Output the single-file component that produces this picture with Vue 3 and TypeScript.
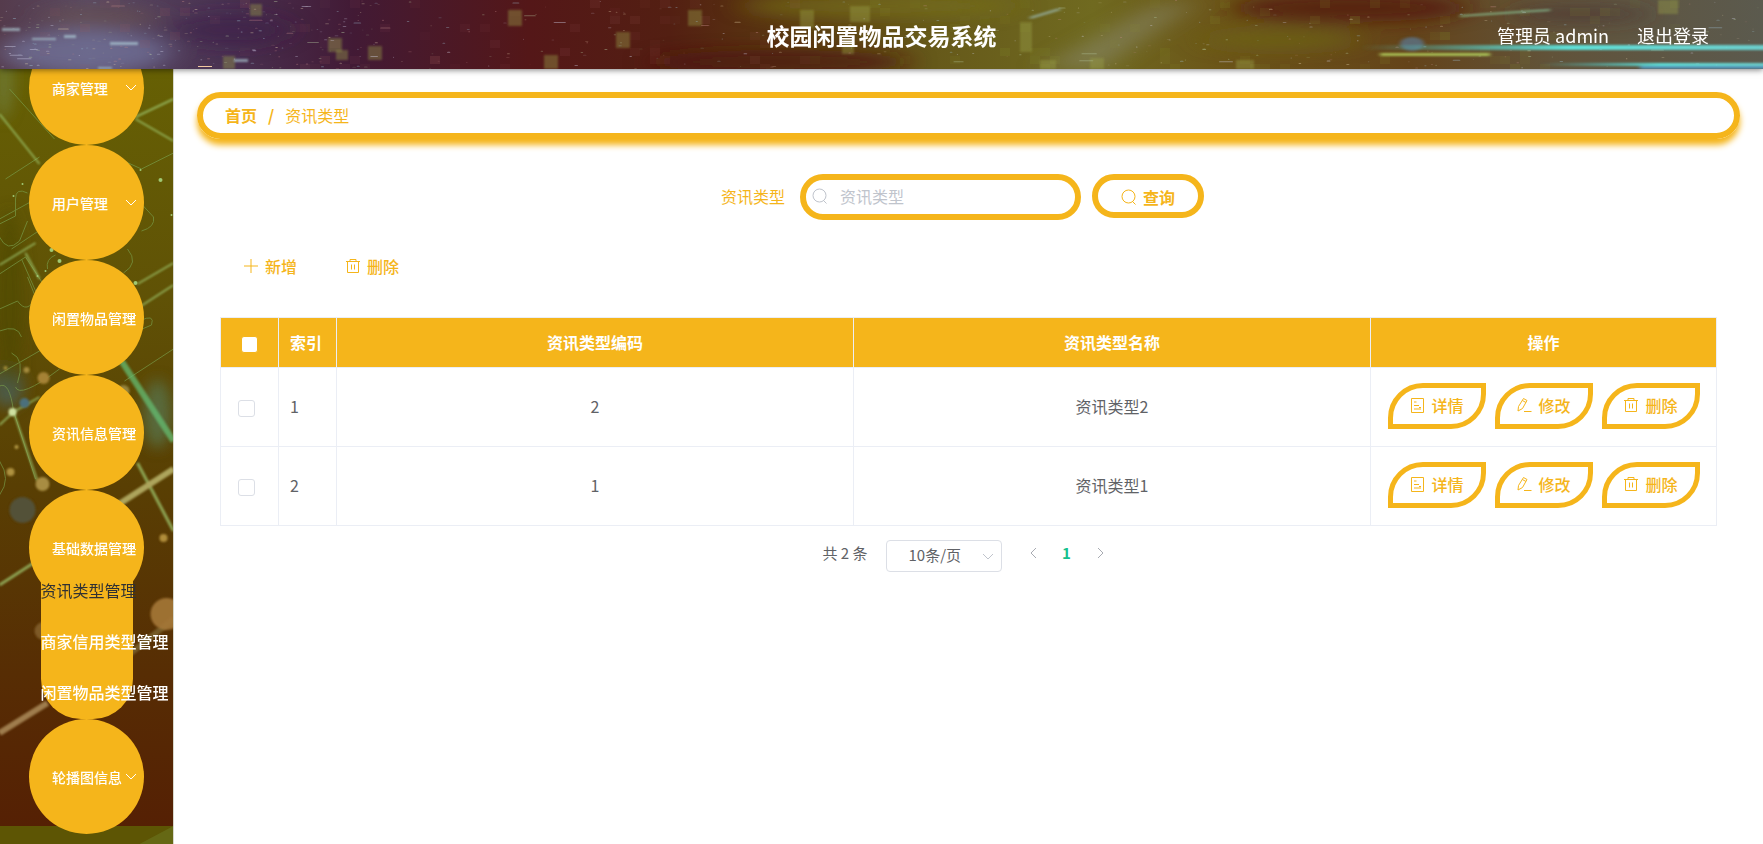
<script setup lang="ts">
import { ref } from 'vue'

interface MenuEntry { label: string }
interface Row { id: number; code: string; name: string }

const menusTop: MenuEntry[] = [
  { label: '商家管理' },
  { label: '用户管理' },
  { label: '闲置物品管理' },
  { label: '资讯信息管理' },
]
const children = ['资讯类型管理', '商家信用类型管理', '闲置物品类型管理']
const rows = ref<Row[]>([
  { id: 1, code: '2', name: '资讯类型2' },
  { id: 2, code: '1', name: '资讯类型1' },
])
const keyword = ref('')
const allChecked = ref(false)
const checked = ref<number[]>([])
const pageSize = ref('10')
const actions = [
  { label: '详情', icon: 'doc' },
  { label: '修改', icon: 'edit' },
  { label: '删除', icon: 'trash' },
]

// Deterministic noise for the starfield in the banner
let seed = 7
function rnd(): number {
  seed = (seed * 16807) % 2147483647
  return seed / 2147483647
}
const colors = ['#e8d6b0', '#9fc4d6', '#c98b8b', '#b5c9a0', '#d8d8f0']
const sparks = Array.from({ length: 520 }, (_, i) => {
  const x = i % 3 === 0 ? rnd() * 380 : rnd() * 1763
  const long = rnd() > 0.95
  return {
    x,
    y: rnd() * 69,
    w: long ? 6 + rnd() * 10 : 1 + rnd() * 3,
    o: long ? 0.4 : 0.1 + rnd() * 0.35,
    c: colors[Math.floor(rnd() * colors.length)],
  }
})
const tiles = Array.from({ length: 150 }, () => {
  const col = Math.floor(rnd() * 170)
  return { x: col * 10, y: Math.floor(rnd() * 9) * 8, o: 0.04 + rnd() * 0.09, c: col > 80 ? '#8d9a30' : '#a05a60' }
})
const blocks = [
  [508, 10, 14, 16], [328, 38, 14, 14], [336, 50, 12, 10], [223, 56, 12, 13], [544, 55, 14, 14],
  [688, 10, 14, 16], [616, 32, 14, 16], [800, 10, 14, 18], [850, 6, 20, 16], [842, 40, 12, 14],
  [1020, 22, 12, 30], [1090, 58, 14, 11], [1040, 60, 16, 9], [1236, 60, 18, 9], [1658, 0, 20, 14],
  [368, 46, 14, 14], [250, 4, 12, 12],
]
</script>

<template>
  <div class="page">
    <header class="banner">
      <svg class="banner-art" viewBox="0 0 1763 69" preserveAspectRatio="none" aria-hidden="true">
        <defs>
          <linearGradient id="sky">
            <stop offset="0" stop-color="#553b4c" />
            <stop offset=".05" stop-color="#5a4a62" />
            <stop offset=".13" stop-color="#493151" />
            <stop offset=".2" stop-color="#421a35" />
            <stop offset=".3" stop-color="#541718" />
            <stop offset=".38" stop-color="#531f12" />
            <stop offset=".45" stop-color="#5a3a10" />
            <stop offset=".53" stop-color="#66591a" />
            <stop offset=".62" stop-color="#706a20" />
            <stop offset=".7" stop-color="#6b5318" />
            <stop offset=".8" stop-color="#644319" />
            <stop offset=".88" stop-color="#61533a" />
            <stop offset="1" stop-color="#5b5a4e" />
          </linearGradient>
          <linearGradient id="beam">
            <stop offset="0" stop-color="#4fd0d0" stop-opacity="0" />
            <stop offset=".5" stop-color="#5fe0d8" />
            <stop offset="1" stop-color="#6fd8d8" stop-opacity=".9" />
          </linearGradient>
          <filter id="soft" x="-50%" y="-50%" width="200%" height="200%"><feGaussianBlur stdDeviation="14 8" /></filter>
          <filter id="glow" x="-20%" y="-50%" width="140%" height="200%"><feGaussianBlur stdDeviation="2 1" /></filter>
          <filter id="edge"><feGaussianBlur stdDeviation="1" /></filter>
        </defs>
        <rect width="1763" height="69" fill="url(#sky)" />
        <g filter="url(#soft)">
          <ellipse cx="85" cy="52" rx="85" ry="22" fill="#7478a0" opacity=".7" />
          <ellipse cx="100" cy="18" rx="60" ry="12" fill="#6b5450" opacity=".6" />
          <ellipse cx="230" cy="30" rx="60" ry="16" fill="#3a1f48" opacity=".6" />
          <ellipse cx="880" cy="6" rx="140" ry="12" fill="#776f20" opacity=".7" />
          <ellipse cx="780" cy="62" rx="130" ry="12" fill="#4e1512" opacity=".8" />
          <ellipse cx="1350" cy="8" rx="120" ry="14" fill="#54200a" opacity=".9" />
          <ellipse cx="1580" cy="14" rx="70" ry="8" fill="#4a3134" opacity=".6" />
          <ellipse cx="1280" cy="40" rx="80" ry="9" fill="#6d6416" opacity=".8" />
          <path d="M1040 69L1150 8L1200 0L1100 69Z" fill="#87866a" opacity=".6" />
        </g>
        <rect v-for="(t, i) in tiles" :key="'t' + i" :x="t.x" :y="t.y" width="10" height="8" :fill="t.c" :opacity="t.o" />
        <g filter="url(#edge)">
          <rect v-for="(b, i) in blocks" :key="'b' + i" :x="b[0]" :y="b[1]" :width="b[2]" :height="b[3]" fill="#9ba04a" opacity=".4" />
        </g>
        <rect v-for="(s, i) in sparks" :key="'s' + i" :x="s.x" :y="s.y" :width="s.w" height="1" rx="1" :fill="s.c" :opacity="s.o" />
        <g filter="url(#glow)">
          <ellipse cx="1412" cy="44" rx="12" ry="7" fill="#5590c8" opacity=".5" />
          <rect x="1360" y="45" width="420" height="5" fill="url(#beam)" />
          <rect x="1380" y="53" width="110" height="3" fill="#b7d860" opacity=".8" />
          <rect x="1540" y="63" width="240" height="3" fill="url(#beam)" />
          <rect x="1640" y="66" width="140" height="3" fill="#4f9fd0" opacity=".8" />
          <path d="M1460 16L1550 10" stroke="#8fd0a0" stroke-width="2" opacity=".7" />
          <path d="M1030 18L1060 9" stroke="#a8d0d8" stroke-width="2" opacity=".7" />
        </g>
        <g fill="#b9dce2" opacity=".6" filter="url(#edge)">
          <rect x="32" y="38" width="24" height="2" /><rect x="64" y="35" width="12" height="3" />
          <rect x="110" y="42" width="28" height="3" /><rect x="98" y="67" width="14" height="2" />
          <rect x="2" y="28" width="18" height="3" /><rect x="234" y="59" width="14" height="3" />
        </g>
        <rect x="198" y="66" width="14" height="1" fill="#f2c9a0" />
      </svg>
      <h1>校园闲置物品交易系统</h1>
      <div class="account">
        <span>管理员 admin</span>
        <button type="button">退出登录</button>
      </div>
    </header>

    <div class="body">
      <aside class="side">
        <svg class="side-art" viewBox="0 0 174 775" preserveAspectRatio="xMidYMin slice" aria-hidden="true">
          <defs>
            <linearGradient id="wall" x1="0" y1="0" x2="0" y2="1">
              <stop offset="0" stop-color="#666004" />
              <stop offset=".3" stop-color="#605206" />
              <stop offset=".55" stop-color="#593f03" />
              <stop offset=".8" stop-color="#572d04" />
              <stop offset="1" stop-color="#552004" />
            </linearGradient>
            <filter id="dots"><feGaussianBlur stdDeviation="1" /></filter>
            <filter id="haze" x="-50%" y="-50%" width="200%" height="200%"><feGaussianBlur stdDeviation="7" /></filter>
          </defs>
          <rect width="174" height="757" fill="url(#wall)" />
          <g filter="url(#haze)">
            <ellipse cx="4" cy="10" rx="10" ry="40" fill="#6f7d3c" opacity=".7" />
            <ellipse cx="8" cy="318" rx="16" ry="20" fill="#4e5c4a" />
            <ellipse cx="158" cy="345" rx="14" ry="34" fill="#586b3e" />
            <ellipse cx="10" cy="230" rx="14" ry="90" fill="#4b4a02" opacity=".6" />
          </g>
          <g fill="none" stroke="#7aa04e" stroke-width="1" opacity=".65">
            <path d="M0 155L16 147V130Q16 118 28 124M0 205L26 188L60 240M12 180L42 160M22 190L44 240M0 240L18 232Q28 246 36 228L28 208M6 110L40 88M0 150L40 128M0 305L52 275M18 314Q26 290 12 284M16 318Q20 330 60 300M0 262Q18 255 22 268" />
            <path d="M10 20L55 70M0 168Q8 184 20 172L28 152M120 90L142 100L174 84M142 135L154 148Q156 158 142 162M128 180Q140 194 124 204M140 252Q156 244 152 256L138 262M125 312L174 280M48 200Q46 190 56 186M0 317Q10 312 14 342L36 410M0 392Q12 410 0 426" />
          </g>
          <g stroke="#9fc86f" fill="none" opacity=".75" filter="url(#dots)">
            <path d="M0 45L40 95" stroke-width="2" />
            <path d="M136 48L174 30M136 50L174 72" stroke-width="2" />
            <path d="M138 215L174 194M140 238L174 216M0 356L14 343L40 328M14 343L38 412" stroke-width="2" />
            <path d="M26 184L40 210M0 196L36 174" stroke-width="2" />
            <path d="M122 292L174 372" stroke="#65bd72" stroke-width="6" />
            <path d="M0 516L34 494M138 394L174 462" stroke-width="3" />
            <path d="M118 436L174 400" stroke="#c9c77c" stroke-width="6" />
            <path d="M0 664L48 634" stroke="#b89a66" stroke-width="6" />
            <path d="M130 585L174 550" stroke="#806b36" stroke-width="6" />
          </g>
          <g filter="url(#dots)">
            <circle cx="167" cy="545" r="16" fill="#a57838" opacity=".9" />
            <circle cx="44" cy="562" r="9" fill="#7e5a26" />
            <circle cx="44" cy="309" r="6" fill="#a58236" />
            <circle cx="124" cy="322" r="6" fill="#96843c" />
            <circle cx="43" cy="415" r="7" fill="#a88d42" />
            <circle cx="23" cy="441" r="13" fill="#535139" />
            <circle cx="25" cy="334" r="5" fill="#4c707b" />
            <circle cx="11" cy="403" r="4" fill="#af9240" />
            <circle cx="27" cy="301" r="3" fill="#a38a3e" />
            <circle cx="164" cy="469" r="4" fill="#b08d3a" />
            <circle cx="13" cy="343" r="4" fill="#cfe0a0" />
            <circle cx="6" cy="299" r="2" fill="#a68e38" />
            <circle cx="17" cy="378" r="2" fill="#b69b46" />
          </g>
          <g fill="#9fc873">
            <circle cx="14" cy="127" r="1" /><circle cx="23" cy="115" r="1" /><circle cx="52" cy="181" r="2" />
            <circle cx="60" cy="192" r="2" /><circle cx="46" cy="202" r="1" /><circle cx="38" cy="207" r="1" />
            <circle cx="136" cy="214" r="2" /><circle cx="161" cy="111" r="2" /><circle cx="141" cy="101" r="1" />
            <circle cx="172" cy="146" r="1" />
          </g>
          <rect y="757" width="174" height="18" fill="#5d5504" />
          <path d="M140 775L174 757V775Z" fill="#6a7420" opacity=".6" />
        </svg>
        <nav>
          <ul class="menu">
            <li v-for="m in menusTop" :key="m.label">
              <button type="button" class="disc">
                <span>{{ m.label }}</span>
                <svg class="chev" viewBox="0 0 14 14"><path d="M1 4L6 9L11 4" /></svg>
              </button>
            </li>
            <li>
              <button type="button" class="disc" aria-expanded="true">
                <span>基础数据管理</span>
                <svg class="chev" viewBox="0 0 14 14"><path d="M1 9L6 4L11 9" /></svg>
              </button>
              <ul class="sub">
                <li v-for="(c, i) in children" :key="c">
                  <a href="#" :class="{ active: i === 0 }">{{ c }}</a>
                </li>
              </ul>
            </li>
            <li>
              <button type="button" class="disc">
                <span>轮播图信息</span>
                <svg class="chev" viewBox="0 0 14 14"><path d="M1 4L6 9L11 4" /></svg>
              </button>
            </li>
          </ul>
        </nav>
      </aside>

      <main>
        <nav class="crumbs" aria-label="breadcrumb">
          <a href="#">首页</a><span class="sep">/</span><span>资讯类型</span>
        </nav>

        <form class="search" @submit.prevent>
          <label for="kw">资讯类型</label>
          <div class="field">
            <svg class="ico" viewBox="0 0 16 16"><circle cx="7.5" cy="7.5" r="6.5" /><path d="M11.5 12.5L14.5 15.5" /></svg>
            <input id="kw" v-model="keyword" type="text" placeholder="资讯类型" />
          </div>
          <button type="submit" class="query">
            <svg class="ico" viewBox="0 0 16 16"><circle cx="7.5" cy="7.5" r="6.5" /><path d="M11.5 12.5L14.5 15.5" /></svg>
            查询
          </button>
        </form>

        <div class="tools">
          <button type="button">
            <svg class="ico" viewBox="0 0 16 16"><path d="M8 1V15M1 8H15" /></svg>新增
          </button>
          <button type="button">
            <svg class="ico" viewBox="0 0 16 16"><path d="M1 3.5H15M5 3.5V1.5H11V3.5M2.5 3.5V14.5H13.5V3.5M6.5 6.5V11.5M9.5 6.5V11.5" /></svg>删除
          </button>
        </div>

        <table>
          <colgroup><col class="c-check" /><col class="c-index" /><col /><col /><col class="c-ops" /></colgroup>
          <thead>
            <tr>
              <th class="check"><input v-model="allChecked" type="checkbox" aria-label="全选" /></th>
              <th class="index">索引</th>
              <th>资讯类型编码</th>
              <th>资讯类型名称</th>
              <th>操作</th>
            </tr>
          </thead>
          <tbody>
            <tr v-for="r in rows" :key="r.id">
              <td class="check"><input v-model="checked" type="checkbox" :value="r.id" :aria-label="'选择 ' + r.id" /></td>
              <td class="index">{{ r.id }}</td>
              <td>{{ r.code }}</td>
              <td>{{ r.name }}</td>
              <td>
                <div class="ops">
                  <button v-for="a in actions" :key="a.icon" type="button">
                    <svg class="ico" viewBox="0 0 16 16">
                      <path v-if="a.icon === 'doc'" d="M2.5 1.5H14.5V15.5H2.5ZM5 5H7.5M5 8.5H10M5 12H12M10 10.5H12" />
                      <path v-else-if="a.icon === 'edit'" d="M2 14L2.5 9.5L7.5 1.5L11 3.5L6.5 11.5L2 14ZM6.4 3.5L10 5.5M8 14.5H15.5" />
                      <path v-else d="M1 3.5H15M5 3.5V1.5H11V3.5M2.5 3.5V14.5H13.5V3.5M6.5 6.5V11.5M9.5 6.5V11.5" />
                    </svg>{{ a.label }}
                  </button>
                </div>
              </td>
            </tr>
          </tbody>
        </table>

        <div class="pager">
          <span class="total">共 2 条</span>
          <div class="size">
            <select v-model="pageSize" aria-label="每页条数">
              <option value="10">10条/页</option>
              <option value="20">20条/页</option>
            </select>
            <svg viewBox="0 0 14 14"><path d="M2 5L7 10L12 5" /></svg>
          </div>
          <button type="button" aria-label="上一页"><svg viewBox="0 0 14 14"><path d="M10 2L5 7L10 12" /></svg></button>
          <button type="button" class="current">1</button>
          <button type="button" aria-label="下一页"><svg viewBox="0 0 14 14"><path d="M4 2L9 7L4 12" /></svg></button>
        </div>
      </main>
    </div>
  </div>
</template>

<style>
body { margin: 0; background: #fff; }
</style>

<style scoped>
* { box-sizing: border-box; }
.page {
  --gold: #f5b51b;
  display: flex;
  flex-direction: column;
  height: 100vh;
  color: #606266;
  font: 16px/24px "Noto Sans CJK SC", "Noto Sans", sans-serif;
}
button, input, select { font: inherit; color: inherit; margin: 0; }
button { background: none; border: 0; padding: 0; cursor: pointer; }
a { color: inherit; text-decoration: none; }
ul { list-style: none; margin: 0; padding: 0; }
svg { fill: none; stroke: currentColor; flex: none; }

.banner {
  position: relative;
  z-index: 2;
  flex: none;
  height: 69px;
  display: grid;
  grid-template-columns: 1fr auto 1fr;
  align-items: center;
  padding: 0 54px;
  color: #fff;
  background: #5a3a20;
  box-shadow: 0 1px 6px rgba(0, 0, 0, .5);
}
.banner-art, .side-art { position: absolute; inset: 0; width: 100%; height: 100%; stroke: none; }
h1 { grid-column: 2; position: relative; margin: 0; font-size: 23px; line-height: 32px; font-weight: 700; }
.account { position: relative; display: flex; justify-content: flex-end; gap: 28px; font-size: 18px; }

.body { flex: 1; display: flex; min-height: 0; }
.side { position: relative; flex: none; width: 174px; overflow: hidden; border-right: 1px solid #d8d8cc; }
.menu { position: relative; margin-top: -39px; }
.menu > li { display: flex; flex-direction: column; align-items: center; }
.disc {
  display: flex;
  align-items: center;
  width: 115px;
  height: 115px;
  padding: 0 0 0 23px;
  border-radius: 50%;
  background: var(--gold);
  color: #fff;
  font-size: 14px;
  font-weight: 500;
  text-align: left;
  white-space: nowrap;
}
.disc span { width: 73px; }
.chev { width: 14px; height: 14px; }
.sub {
  width: 92px;
  height: 154px;
  margin-top: -40px;
  border-radius: 0 0 40px 40px;
  background: var(--gold);
  color: #fff;
  white-space: nowrap;
}
.sub a { display: block; line-height: 51px; font-weight: 500; }
.sub a.active { color: #303133; font-weight: 400; }

main { flex: 1; min-width: 0; padding: 23px; }
.crumbs {
  display: flex;
  align-items: center;
  height: 47px;
  padding: 0 22px 2px;
  border: 6px solid var(--gold);
  border-radius: 24px;
  box-shadow: 0 6px 6px var(--gold);
  color: var(--gold);
}
.crumbs a, .sep { font-weight: 700; }
.sep { margin: 0 11px; }

.search { display: flex; justify-content: center; gap: 11px; margin: 35px 12px 0 0; color: var(--gold); }
.search label { line-height: 44px; margin-right: 4px; }
.field {
  display: flex;
  align-items: center;
  gap: 12px;
  width: 281px;
  height: 46px;
  padding: 0 6px 2px;
  border: 6px solid var(--gold);
  border-radius: 23px;
  color: #c0c4cc;
}
.field input { flex: 1; min-width: 0; border: 0; padding: 0; outline: 0; background: none; color: #606266; }
.field input::placeholder { color: #c0c4cc; opacity: 1; }
.ico { width: 16px; height: 16px; }
.query {
  display: flex;
  align-items: center;
  justify-content: center;
  gap: 6px;
  width: 112px;
  height: 44px;
  padding-top: 2px;
  border: 6px solid var(--gold);
  border-radius: 22px;
  font-weight: 700;
}

.tools { display: flex; gap: 48px; margin: 34px 0 39px 46px; color: var(--gold); font-weight: 500; }
.tools button, .ops button { display: flex; align-items: center; gap: 6px; }

table { width: calc(100% - 46px); margin: 0 23px; border-collapse: collapse; table-layout: fixed; }
.c-check, .c-index { width: 58px; }
.c-ops { width: 346px; }
th, td { border: 1px solid #ebeef5; padding: 0 0 2px; text-align: center; }
th { height: 50px; background: var(--gold); color: #fff; font-weight: 700; }
td { height: 79px; }
th.index, td.index { padding-left: 11px; text-align: left; }
td.check { padding-left: 17px; text-align: left; }
input[type="checkbox"] {
  appearance: none;
  display: inline-block;
  width: 17px;
  height: 17px;
  vertical-align: middle;
  border: 1px solid #dcdfe6;
  border-radius: 3px;
  background: #fff;
}
th input[type="checkbox"] { border-color: var(--gold); }
input[type="checkbox"]:checked { background: #13ce9a; }
.ops { display: flex; justify-content: center; gap: 9px; }
.ops button {
  justify-content: center;
  width: 98px;
  height: 46px;
  padding-bottom: 2px;
  border: 5px solid var(--gold);
  border-radius: 35px 0;
  color: var(--gold);
  font-weight: 500;
}

.pager { display: flex; justify-content: center; align-items: center; margin: 14px 0 0 3px; font-size: 15px; }
.total { margin: 0 18px 6px 0; }
.size { position: relative; width: 116px; margin-right: 14px; }
.size select {
  width: 100%;
  height: 32px;
  padding: 0 22px 2px;
  appearance: none;
  border: 1px solid #dcdfe6;
  border-radius: 4px;
  background: #fff;
}
.size svg { position: absolute; right: 7px; top: 9px; width: 14px; height: 14px; color: #c0c4cc; pointer-events: none; }
.pager button { width: 34px; height: 24px; margin-bottom: 6px; color: #a8abb2; }
.pager button svg { width: 14px; height: 14px; vertical-align: -1px; }
.pager .current { color: #15c08d; font-weight: 700; }
</style>
